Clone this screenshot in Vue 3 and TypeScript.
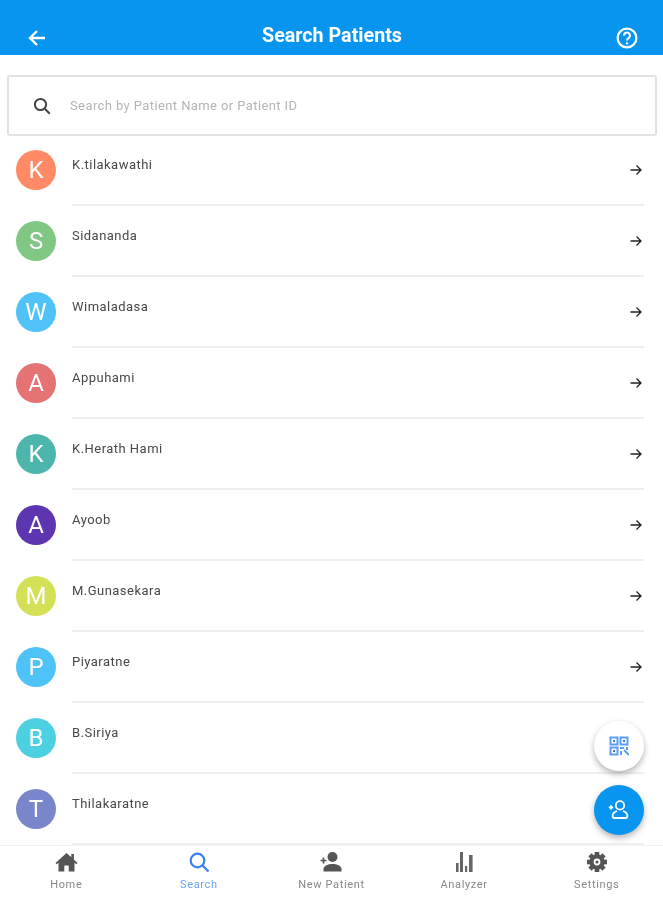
<template>
  <div class="screen">
    <header class="top-bar">
      <svg width="24" height="24" viewBox="0 0 24 24" fill="none" stroke="#fff" stroke-width="2.4">
        <path d="M20 12H5M12 5l-7 7 7 7" />
      </svg>
      <span class="title">Search Patients</span>
      <svg width="24" height="24" viewBox="0 0 24 24" fill="none" stroke="#fff" stroke-width="2.2">
        <circle cx="12" cy="12" r="9.4" />
        <path d="M9 9.6a3 3 0 1 1 4.7 2.4c-1 .7-1.7 1.3-1.7 2.6" />
        <circle cx="12" cy="17.4" r="1.2" fill="#fff" stroke="none" />
      </svg>
    </header>

    <div class="search-box">
      <svg width="24" height="24" viewBox="0 0 24 24" fill="none" stroke="#444" stroke-width="2">
        <circle cx="10.5" cy="10.5" r="5.6" />
        <path d="M14.8 14.8l5 5" />
      </svg>
      <span class="placeholder">Search by Patient Name or Patient ID</span>
    </div>

    <ul class="patients">
      <li v-for="p in patients" :key="p.name" class="patient">
        <div class="avatar" :style="{ backgroundColor: p.color }">{{ p.name[0] }}</div>
        <div class="row-body">
          <span class="name">{{ p.name }}</span>
          <svg class="go" width="14" height="14" viewBox="0 0 14 14" fill="none" stroke="#222" stroke-width="1.3">
            <path d="M1.5 7h10.5M7.5 2.5L12 7l-4.5 4.5" />
          </svg>
        </div>
      </li>
    </ul>

    <button class="fab fab-qr">
      <svg width="20" height="20" viewBox="0 0 20 20" fill="none" stroke="#5b9ff5" stroke-width="2">
        <rect x="1.5" y="1.5" width="7" height="7" />
        <rect x="11.5" y="1.5" width="7" height="7" />
        <rect x="1.5" y="11.5" width="7" height="7" />
        <path d="M11 12h4M12 15v4M15 14l5 5M18 11v3" />
        <rect x="4" y="4" width="2" height="2" fill="#2f7fe8" stroke="none" />
        <rect x="14" y="4" width="2" height="2" fill="#2f7fe8" stroke="none" />
        <rect x="4" y="14" width="2" height="2" fill="#2f7fe8" stroke="none" />
      </svg>
    </button>
    <button class="fab fab-add">
      <svg width="24" height="24" viewBox="0 0 24 24" fill="none" stroke="#fff" stroke-width="1.8">
        <circle cx="13" cy="7.4" r="4.2" />
        <path d="M10 13C7.5 13.8 5.6 15.4 5.6 18c0 1.4.8 2 2 2h10.8c1.2 0 2-.6 2-2 0-2.6-1.9-4.2-4.4-5" />
        <path d="M1.8 9.4h4.4M4 7.2v4.4" />
      </svg>
    </button>

    <nav class="tabs">
      <div v-for="t in tabs" :key="t.label" class="tab" :class="{ active: t.active }">
        <svg width="24" height="24" viewBox="0 0 24 24" v-html="t.icon"></svg>
        <span>{{ t.label }}</span>
      </div>
    </nav>
  </div>
</template>

<script setup lang="ts">
const patients = [
  { name: 'K.tilakawathi', color: '#ff8a65' },
  { name: 'Sidananda', color: '#81c784' },
  { name: 'Wimaladasa', color: '#4fc3f7' },
  { name: 'Appuhami', color: '#e57373' },
  { name: 'K.Herath Hami', color: '#4db6ac' },
  { name: 'Ayoob', color: '#5e35b1' },
  { name: 'M.Gunasekara', color: '#d4e157' },
  { name: 'Piyaratne', color: '#4fc3f7' },
  { name: 'B.Siriya', color: '#4dd0e1' },
  { name: 'Thilakaratne', color: '#7986cb' }
]

const gearTeeth = [0, 45, 90, 135]
  .map((a) => `<rect x="9.7" y="2" width="4.6" height="20" transform="rotate(${a} 12 12)"/>`)
  .join('')

const tabs = [
  {
    label: 'Home',
    icon: '<path fill="#555" d="M12.5 3 1.5 13l1.2 1.3 1.8-1.6V21.5h5.8v-6h4.4v6h5.8v-8.8l1.8 1.6 1.2-1.3-3.6-3.3V4h-2.6v3.3z"/>'
  },
  {
    label: 'Search',
    active: true,
    icon: '<circle cx="10.5" cy="10.5" r="6.8" fill="none" stroke="#3b82f0" stroke-width="2.2"/><path d="M15.5 15.5l6 6" stroke="#3b82f0" stroke-width="2.4" fill="none"/>'
  },
  {
    label: 'New Patient',
    icon: '<circle cx="13.5" cy="7" r="5" fill="#555"/><path fill="#555" d="M4.5 21.5v-2.3c0-3.4 4.6-5.2 9-5.2s9 1.8 9 5.2v2.3z"/><path d="M1.5 10.5h6M4.5 7.5v6" stroke="#555" stroke-width="1.7" fill="none"/>'
  },
  {
    label: 'Analyzer',
    icon: '<path fill="#666" d="M4 13h2.6v9H4zM8 2h3v20H8zM13 16h2.2v6H13zM17 5h3.6v17H17z"/>'
  },
  {
    label: 'Settings',
    icon: `<g fill="#555">${gearTeeth}<circle cx="12" cy="12" r="7.6"/></g><circle cx="12" cy="12" r="3.4" fill="#fff"/><circle cx="12" cy="12" r="1.5" fill="#555"/>`
  }
]
</script>

<style>
html,
body {
  margin: 0;
  background: #fff;
}
</style>

<style scoped>
.screen {
  position: relative;
  width: 663px;
  height: 900px;
  display: flex;
  flex-direction: column;
  overflow: hidden;
  background: #fff;
  font-family: Roboto, 'Liberation Sans', sans-serif;
  filter: blur(0.4px);
}

.top-bar {
  flex: none;
  height: 55px;
  box-sizing: border-box;
  padding: 20px 24px 0 25px;
  display: flex;
  align-items: center;
  justify-content: space-between;
  background: #0795f0;
  color: #fff;
}

.title {
  margin-bottom: 4px;
  font-size: 19.7px;
  font-weight: 700;
}

.search-box {
  flex: none;
  height: 61px;
  margin: 20px 6px 0 7px;
  box-sizing: border-box;
  padding-left: 21px;
  display: flex;
  align-items: center;
  gap: 16px;
  border: 2px solid #e2e2e2;
  border-radius: 3px;
}

.placeholder {
  font-size: 13px;
  letter-spacing: 0.4px;
  color: #b4b4b4;
}

.patients {
  flex: 1;
  margin: 0;
  padding: 0;
  list-style: none;
  overflow: hidden;
}

.patient {
  height: 71px;
  padding-left: 16px;
  display: flex;
  gap: 16px;
}

.avatar {
  flex: none;
  width: 40px;
  height: 40px;
  margin-top: 14px;
  border-radius: 50%;
  display: flex;
  align-items: center;
  justify-content: center;
  font-size: 24px;
  color: #fff;
}

.row-body {
  flex: 1;
  margin: 0 19px 1px 0;
  padding: 20px 1px 0 0;
  display: flex;
  justify-content: space-between;
  align-items: flex-start;
  border-bottom: 2px solid #eee;
}

.name {
  font-size: 13px;
  line-height: 17px;
  letter-spacing: 0.47px;
  color: #484848;
}

.go {
  margin-top: 7px;
}

.fab {
  position: absolute;
  right: 19px;
  width: 50px;
  height: 50px;
  padding: 0;
  border: none;
  border-radius: 50%;
  display: flex;
  align-items: center;
  justify-content: center;
  box-shadow: 0 3px 6px rgba(0, 0, 0, 0.3);
}

.fab-qr {
  top: 721px;
  background: #fff;
}

.fab-add {
  top: 785px;
  background: #0795f0;
}

.tabs {
  flex: none;
  height: 55px;
  box-sizing: border-box;
  display: flex;
  background: #fff;
  border-top: 1px solid #f2f2f2;
}

.tab {
  flex: 1;
  display: flex;
  flex-direction: column;
  align-items: center;
  padding-top: 4px;
  font-size: 11px;
  letter-spacing: 0.65px;
  color: #888;
}

.tab span {
  margin-top: 4px;
}

.tab.active {
  color: #6aa3f5;
}
</style>
